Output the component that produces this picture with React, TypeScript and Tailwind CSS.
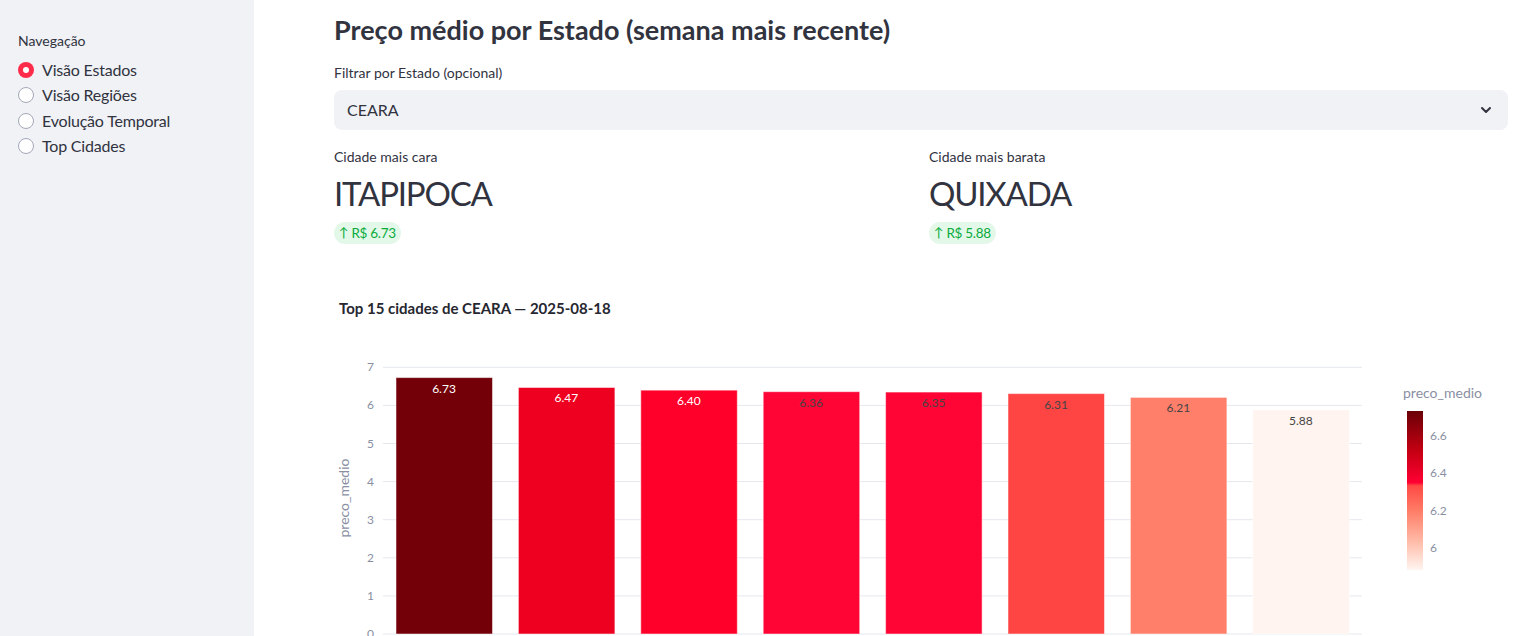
const bars = [
  { v: 6.73, fill: '#730008', text: '#ffffff' },
  { v: 6.47, fill: '#ee0020', text: '#ffffff' },
  { v: 6.4, fill: '#ff002a', text: '#ffffff' },
  { v: 6.36, fill: '#ff0535', text: '#444444' },
  { v: 6.35, fill: '#ff0535', text: '#444444' },
  { v: 6.31, fill: '#ff4444', text: '#444444' },
  { v: 6.21, fill: '#ff7f6a', text: '#444444' },
  { v: 5.88, fill: '#fff4ef', text: '#444444' },
]

const nav = ['Visão Estados', 'Visão Regiões', 'Evolução Temporal', 'Top Cidades']

// y in svg coords (svg top sits at page y=280)
const yOf = (v: number) => 354 - v * 38.1

function Chart() {
  return (
    <svg width="1174" height="400" className="block" style={{ fontFamily: 'Lato, "Open Sans", sans-serif' }}>
      <defs>
        <linearGradient id="cb" x1="0" y1="0" x2="0" y2="1">
          <stop offset="0" stopColor="#6a0007" />
          <stop offset="0.25" stopColor="#c40012" />
          <stop offset="0.45" stopColor="#ff0033" />
          <stop offset="0.47" stopColor="#ff4a44" />
          <stop offset="0.62" stopColor="#ff7a64" />
          <stop offset="0.82" stopColor="#ffbba8" />
          <stop offset="1" stopColor="#fff5f0" />
        </linearGradient>
      </defs>
      <text x="5" y="34" fontSize="15" fontWeight="700" fill="#262730">
        Top 15 cidades de CEARA — 2025-08-18
      </text>
      {[0, 1, 2, 3, 4, 5, 6, 7].map((t) => (
        <g key={t}>
          <line x1="49" x2="1028" y1={yOf(t)} y2={yOf(t)} stroke="#e6e8ef" strokeWidth="1" />
          <text x="40" y={yOf(t) + 4} fontSize="12" fill="#8a8fa3" textAnchor="end">
            {t}
          </text>
        </g>
      ))}
      <text
        x="0"
        y="0"
        fontSize="14"
        fill="#8a8fa3"
        textAnchor="middle"
        transform="translate(15 218) rotate(-90)"
      >
        preco_medio
      </text>
      {bars.map((b, i) => {
        const x = 62 + i * 122.4
        const top = yOf(b.v)
        return (
          <g key={i}>
            <rect
              x={x}
              y={top}
              width="96.5"
              height={yOf(0) - top}
              fill={b.fill}
              stroke="#ffffff"
              strokeOpacity="0.5"
              strokeWidth="1"
            />
            <text x={x + 48} y={top + 15} fontSize="12" fill={b.text} textAnchor="middle">
              {b.v.toFixed(2)}
            </text>
          </g>
        )
      })}
      <text x="1069" y="118" fontSize="14" fill="#8a8fa3">
        preco_medio
      </text>
      <rect x="1073" y="131" width="16" height="159" fill="url(#cb)" />
      {[
        ['6.6', 156],
        ['6.4', 193],
        ['6.2', 231],
        ['6', 268],
      ].map(([l, y]) => (
        <text key={l} x="1096" y={(y as number) + 4} fontSize="12" fill="#8a8fa3">
          {l}
        </text>
      ))}
    </svg>
  )
}

function Metric({ label, value, delta }: { label: string; value: string; delta: string }) {
  return (
    <div className="flex flex-col items-start">
      <p className="text-[14px] leading-[20px] text-[#31333f]">{label}</p>
      <p className="mt-[2px] text-[33px] leading-[48px] tracking-[-1.2px] text-[#31333f]">{value}</p>
      <span className="mt-[5px] flex h-[22px] items-center gap-[3px] rounded-full bg-[#e4f8ea] px-[5px] text-[13.5px] tracking-[-0.3px] text-[#09ab3b]">
        <span className="text-[13px]">↑</span>
        {delta}
      </span>
    </div>
  )
}

export default function App() {
  return (
    <div
      className="flex h-[636px] w-[1538px] overflow-hidden bg-white text-[#31333f]"
      style={{ fontFamily: 'Lato, "Open Sans", sans-serif' }}
    >
      <aside className="w-[254px] shrink-0 bg-[#f0f2f6] px-[18px] pt-[31px]">
        <p className="text-[14px] leading-[20px] text-[#31333f]">Navegação</p>
        <div className="mt-[6px] flex flex-col">
          {nav.map((n, i) => (
            <label key={n} className="flex h-[25.5px] items-center gap-[8px] text-[16px] tracking-[-0.2px]">
              {i === 0 ? (
                <span className="flex h-[16px] w-[16px] items-center justify-center rounded-full bg-[#ff2b4b]">
                  <span className="h-[6px] w-[6px] rounded-full bg-white" />
                </span>
              ) : (
                <span className="h-[16px] w-[16px] rounded-full border border-[#a3a8b8] bg-white" />
              )}
              {n}
            </label>
          ))}
        </div>
      </aside>
      <main className="flex-1 pl-[80px] pr-[30px] pt-[12px]">
        <h2 className="text-[27px] font-bold leading-[36px] text-[#31333f]">
          Preço médio por Estado (semana mais recente)
        </h2>
        <p className="mt-[15px] text-[14px] leading-[20px]">Filtrar por Estado (opcional)</p>
        <div className="mt-[7px] flex h-[40px] items-center justify-between rounded-[8px] bg-[#f0f2f6] pl-[13px] pr-[14px]">
          <span className="text-[16px]">CEARA</span>
          <svg width="16" height="16" viewBox="0 0 24 24" fill="none" stroke="#31333f" strokeWidth="3" strokeLinecap="round" strokeLinejoin="round">
            <path d="M6 9l6 6 6-6" />
          </svg>
        </div>
        <div className="mt-[17px] grid grid-cols-2 gap-[16px]">
          <Metric label="Cidade mais cara" value="ITAPIPOCA" delta="R$ 6.73" />
          <Metric label="Cidade mais barata" value="QUIXADA" delta="R$ 5.88" />
        </div>
        <div className="mt-[36px]">
          <Chart />
        </div>
      </main>
    </div>
  )
}
